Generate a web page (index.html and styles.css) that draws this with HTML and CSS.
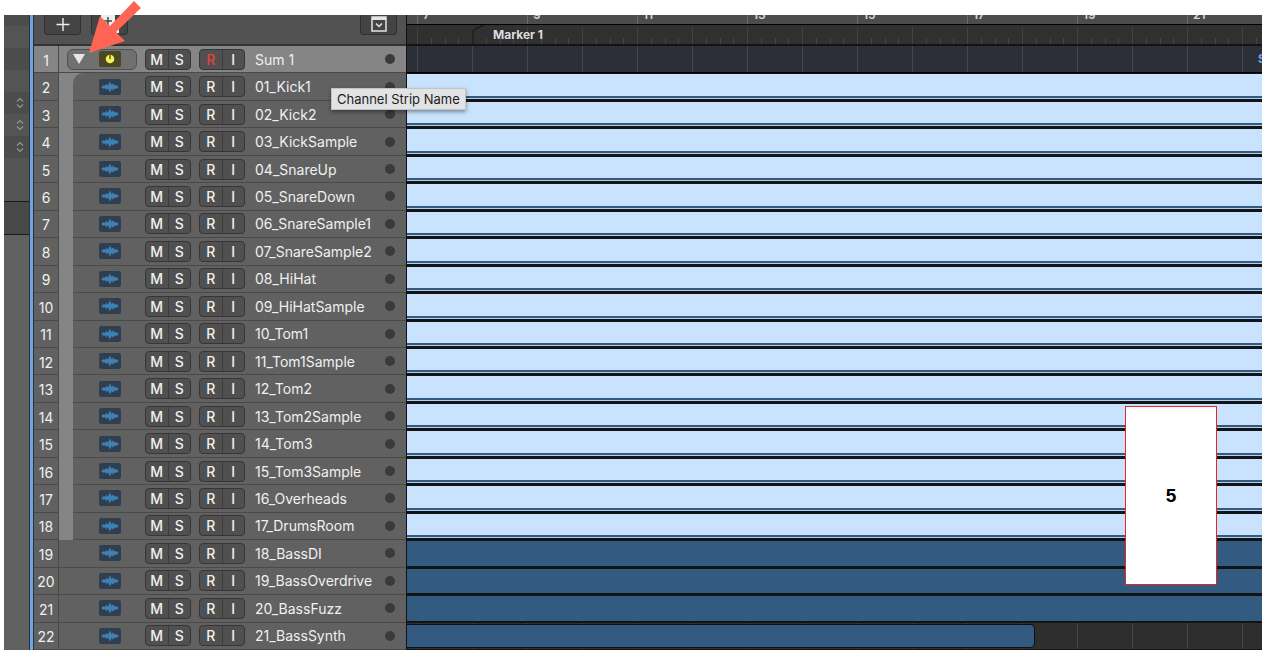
FILE: index.html
```
<!DOCTYPE html>
<html lang="en">
<head>
<meta charset="UTF-8" />
<meta name="viewport" content="width=device-width, initial-scale=1.0"/>
<title>Track Stack</title>
<link rel="stylesheet" href="styles.css">
</head>
<body>

<svg class="symbols">
  <symbol id="wave" viewBox="0 0 22 16">
    <path d="M2 8L5 6L6 7L7.500 5L9 6.500L11 2.500L12.500 6L14 4.500L15.500 6.500L17 6L20 8L17 10L15.500 9.500L14 11.500L12.500 10L11 13.500L9 9.500L7.500 11L6 9L5 10Z" fill="#3f80b5"/>
  </symbol>
  <symbol id="knob" viewBox="0 0 22 16">
    <circle cx="11" cy="8" r="4.300" fill="#f4ee55"/>
    <path d="M11 4v4" stroke="#5a571c" stroke-width="1.400"/>
  </symbol>
  <symbol id="updown" viewBox="0 0 10 12">
    <path d="M2 4.500L5 1.500L8 4.500M2 7.500L5 10.500L8 7.500" stroke="#969696" stroke-width="1.200" fill="none"/>
  </symbol>
</svg>

<div class="window">
  <aside class="inspector">
    <div class="strip"></div>
    <div class="strip light"></div>
    <div class="strip"></div>
    <div class="strip light"></div>
    <div class="strip"><svg><use href="#updown"/></svg></div>
    <div class="strip light"><svg><use href="#updown"/></svg></div>
    <div class="strip"><svg><use href="#updown"/></svg></div>
    <div class="strip tall"></div>
    <div class="strip section"></div>
    <div class="rest"></div>
  </aside>

  <section class="tracks">
    <header class="toolbar">
      <button class="tool" aria-label="Add track">
        <svg width="14" height="14" viewBox="0 0 14 14"><path d="M7 0v13M0.500 6.500h13" stroke="#eee" stroke-width="1.400"/></svg>
      </button>
      <button class="tool" aria-label="Duplicate track">
        <svg width="22" height="20" viewBox="0 0 22 20"><rect x="2" y="-2" width="14" height="14" rx="1" fill="#eee"/><path d="M9 2v8M5 6h8" stroke="#444" stroke-width="1.500"/><path d="M19 5v12H8" stroke="#eee" stroke-width="2" fill="none"/></svg>
      </button>
      <button class="tool config" aria-label="Track header options">
        <svg width="16" height="16" viewBox="0 0 16 16"><rect x="1" y="0" width="14" height="14" fill="none" stroke="#e4e4e4" stroke-width="1.500"/><path d="M1 1.500h14" stroke="#e4e4e4" stroke-width="3"/><path d="M5 6.500l3 3l3-3" stroke="#e4e4e4" stroke-width="1.500" fill="none"/></svg>
      </button>
    </header>
    <ol class="track-list" id="trackList"></ol>
  </section>

  <section class="arrange">
    <div class="ruler" id="ruler"></div>
    <div class="markers">
      <svg width="14" height="19" viewBox="0 0 14 19"><path d="M1 19V5L12 0" stroke="#1c1c1c" stroke-width="1.500" fill="none"/></svg>
      <span>Marker 1</span>
    </div>
    <div class="lanes" id="lanes"></div>
  </section>
</div>

<div class="tooltip" role="tooltip">Channel Strip Name</div>
<div class="callout">5</div>
<svg class="arrow" width="60" height="60" viewBox="0 0 60 60">
  <path d="M9 53L20 16L30 26L54 1L61 8L36 32L45 41Z" fill="#ff6554"/>
</svg>

<script src="tracks.js"></script>
</body>
</html>
```
FILE: styles.css
```
* {
  box-sizing: border-box;
}
body {
  margin: 0;
  background-color: #fff;
  color: #f0f0f0;
  font-family: Inter, "Liberation Sans", sans-serif;
  font-size: 14px;
}
button {
  margin: 0;
  padding: 0;
  border: none;
  background: none;
  color: inherit;
  font: inherit;
}
.symbols {
  display: none;
}
.window {
  display: flex;
  height: calc(100vh - 24px);
  margin: 15px 6px 9px 4px;
  overflow: hidden;
}

/* Inspector */
.inspector {
  display: flex;
  flex-direction: column;
  flex: none;
  width: 30px;
  border-right: 1px solid #303030;
  box-shadow: inset -3px 0 #6aa5e8, inset -4px 0 #303030;
  background-color: #616161;
}
.strip {
  display: flex;
  align-items: center;
  justify-content: center;
  height: 22px;
  margin-right: 4px;
  padding-left: 6px;
  background-color: #4c4c4c;
}
.strip:first-child {
  height: 11px;
}
.strip.light {
  background-color: #545454;
}
.strip svg {
  width: 10px;
  height: 12px;
}
.strip.tall {
  height: 43px;
  background-color: #545454;
}
.strip.section {
  height: 34px;
  border-top: 1px solid #1a1a1a;
  border-bottom: 1px solid #1a1a1a;
  background-color: #484848;
}
.rest {
  flex: 1;
}

/* Track headers */
.tracks {
  display: flex;
  flex-direction: column;
  flex: none;
  width: 372px;
}
.toolbar {
  display: flex;
  flex: none;
  gap: 10px;
  height: 31px;
  padding: 0 9px 0 10px;
  border-bottom: 2px solid #333;
  background-color: #525252;
}
.tool {
  display: flex;
  align-items: center;
  justify-content: center;
  width: 37px;
  height: 20px;
  border: 1px solid #303030;
  border-top: none;
  border-radius: 0 0 4px 4px;
  background-color: #444;
}
.tool svg {
  overflow: visible;
}
.tool.config {
  margin-left: auto;
}
.track-list {
  display: grid;
  grid-template-rows: repeat(22, minmax(0, 1fr));
  flex: 1;
  min-height: 0;
  margin: 0;
  padding: 0;
  list-style: none;
}
.track {
  display: flex;
  background-color: #616161;
}
.track.member,
.track.selected {
  background-color: #858585;
}
.number {
  display: flex;
  align-items: center;
  justify-content: center;
  width: 25px;
  padding-top: 2px;
  border-right: 1px solid #4a4a4a;
  border-bottom: 1px solid #4a4a4a;
  background-color: #616161;
}
.header {
  display: flex;
  align-items: center;
  flex: 1;
  margin-left: 14px;
  padding-right: 11px;
  border-bottom: 1px solid #4a4a4a;
  background-color: #616161;
}
.track.selected .number,
.track.selected .header {
  background-color: #858585;
}
.track:not(.member) .header {
  margin-left: 0;
  padding-left: 14px;
}
.track.selected .header {
  padding-left: 8px;
}
.track.selected + .member .header {
  border-top-left-radius: 10px;
}
.icon {
  width: 22px;
  height: 16px;
  margin: 0 24px 0 26px;
  border-radius: 2px;
  background-color: #2f3f4f;
}
.stack {
  display: flex;
  align-items: center;
  width: 70px;
  height: 21px;
  margin-right: 8px;
  padding: 0 0 0 5px;
  border: 1px solid #505050;
  border-radius: 6px;
  background-color: #707070;
}
.track.selected .stack .icon {
  margin: 0 0 0 14px;
  background-color: #4a4824;
}
.pair {
  display: flex;
  width: 46px;
  height: 21px;
  margin-right: 8px;
  border: 1px solid #363636;
  border-radius: 4px;
  background-color: #505050;
}
.pair button {
  flex: 1;
  font-weight: 500;
}
.pair button + button {
  border-left: 1px solid #3c3c3c;
}
.pair .armed {
  color: #e8403c;
}
.name {
  flex: 1;
  margin-left: 2px;
  white-space: nowrap;
}
.dot {
  width: 10px;
  height: 10px;
  border-radius: 50%;
  background-color: #3a3a3a;
}

/* Arrange area */
.arrange {
  display: flex;
  flex-direction: column;
  flex: 1;
  min-width: 0;
  border-left: 1px solid #111;
}
.ruler {
  display: flex;
  flex: none;
  height: 10px;
  padding-left: 10px;
  overflow: hidden;
  border-bottom: 1px solid #000;
  background-color: #4c4c4c;
}
.ruler span {
  flex: none;
  width: 110px;
  height: 11px;
  margin-top: -1px;
  padding-left: 5px;
  border-left: 1px solid #6a6a6a;
  font-size: 12px;
  font-weight: 600;
  line-height: 1px;
  color: #d8d8d8;
}
.markers {
  display: flex;
  flex: none;
  height: 21px;
  padding-left: 65px;
  border-bottom: 2px solid #131416;
  background-color: #303030;
  background-image:
    repeating-linear-gradient(to right, #444 0 1px, transparent 1px 55px),
    repeating-linear-gradient(to right, #444 0 1px, transparent 1px 14px, #444 14px 15px, transparent 15px 28px, #444 28px 29px, transparent 29px 41px, #444 41px 42px, transparent 42px 55px);
  background-position: 10px 3px, 10px 13px;
  background-repeat: no-repeat;
}
.markers span {
  margin-left: 7px;
  font-size: 12px;
  font-weight: 700;
  line-height: 19px;
  color: #ddd;
}
.markers svg {
  flex: none;
}
.lanes {
  display: grid;
  grid-template-rows: repeat(22, minmax(0, 1fr));
  flex: 1;
  min-height: 0;
  background-color: #131416;
}
.lane {
  overflow: hidden;
  padding: 1px 0 2px;
}
.lane.sum,
.lane.open {
  background-color: #2e2e2e;
  background-image: repeating-linear-gradient(to right, #44464a 0 1px, transparent 1px 55px);
  background-position: 10px 0;
  background-repeat: no-repeat;
}
.lane.sum {
  padding: 0;
  border-bottom: 1px solid #000;
  background-color: #2c2f38;
  color: #6fa6ee;
  font-size: 12px;
  font-weight: 700;
  line-height: 26px;
  white-space: nowrap;
}
.lane.sum span {
  margin-left: calc(100% - 4px);
}
.region {
  height: 100%;
  background-color: #335a80;
}
.region.drums {
  background-image: linear-gradient(to top, #b4cfe9 0 1px, #335a80 1px 3px, #c9e3fe 3px);
}
.region.ending {
  border: 1px solid #0c0f13;
  border-left: none;
  border-radius: 0 5px 5px 0;
}
.lane.open {
  padding-bottom: 1px;
  border-bottom: 1px solid #131416;
}

/* Overlays */
.tooltip {
  position: absolute;
  left: 331px;
  top: 88px;
  padding: 0 5px;
  border: 1px solid #c4c4c4;
  background-color: #e2e3e5;
  box-shadow: 0 2px 4px rgba(0,0,0,0.4);
  color: #1c1c1c;
  font-size: 13px;
  line-height: 20px;
}
.callout {
  position: absolute;
  left: 1125px;
  top: 406px;
  display: flex;
  align-items: center;
  justify-content: center;
  width: 92px;
  height: 179px;
  border: 1px solid #e8261f;
  background-color: #fff;
  color: #000;
  font-family: "Liberation Sans", sans-serif;
  font-size: 19px;
  font-weight: 700;
}
.arrow {
  position: absolute;
  left: 80px;
  top: 0;
  overflow: visible;
}
```
FILE: tracks.js
```
const names = [
  'Sum 1', '01_Kick1', '02_Kick2', '03_KickSample', '04_SnareUp', '05_SnareDown',
  '06_SnareSample1', '07_SnareSample2', '08_HiHat', '09_HiHatSample', '10_Tom1',
  '11_Tom1Sample', '12_Tom2', '13_Tom2Sample', '14_Tom3', '15_Tom3Sample',
  '16_Overheads', '17_DrumsRoom', '18_BassDI', '19_BassOverdrive', '20_BassFuzz',
  '21_BassSynth'
];
const lastMember = 17;

const trackList = document.getElementById('trackList');
const lanes = document.getElementById('lanes');
const ruler = document.getElementById('ruler');

function trackHtml(name, i) {
  const kind = i === 0 ? 'selected' : i <= lastMember ? 'member' : '';
  const icon = i === 0
    ? '<button class="stack" aria-label="Toggle stack"><svg width="12" height="10" viewBox="0 0 12 10"><path d="M0 0H12L6 10Z" fill="#e6e6e6"/></svg><svg class="icon"><use href="#knob"/></svg></button>'
    : '<svg class="icon"><use href="#wave"/></svg>';
  return `<li class="track ${kind}">
    <span class="number">${i + 1}</span>
    <div class="header">
      ${icon}
      <div class="pair"><button>M</button><button>S</button></div>
      <div class="pair"><button class="${i === 0 ? 'armed' : ''}">R</button><button>I</button></div>
      <span class="name">${name}</span>
      <span class="dot"></span>
    </div>
  </li>`;
}

function laneHtml(name, i) {
  if (i === 0) {
    return `<div class="lane sum"><span>${name}</span></div>`;
  }
  if (i === names.length - 1) {
    return '<div class="lane open"><div class="region ending" style="width: 73.4%"></div></div>';
  }
  return `<div class="lane"><div class="region ${i <= lastMember ? 'drums' : ''}"></div></div>`;
}

trackList.innerHTML = names.map(trackHtml).join('');
lanes.innerHTML = names.map(laneHtml).join('');

// Bar numbers
for (let bar = 7; bar <= 21; bar += 2) {
  ruler.innerHTML += `<span>${bar}</span>`;
}
```
